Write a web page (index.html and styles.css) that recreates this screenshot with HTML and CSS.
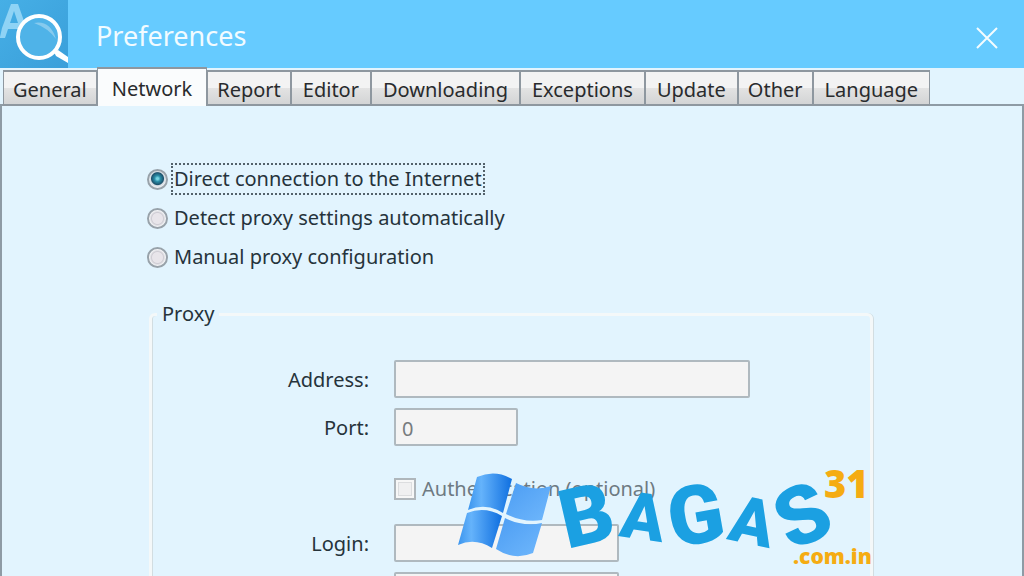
FILE: index.html
```html
<!DOCTYPE html>
<html lang="en">
<head>
<meta charset="utf-8">
<meta name="viewport" content="width=device-width, initial-scale=1">
<title>Preferences</title>
<link rel="stylesheet" href="styles.css">
</head>
<body>
<div class="window">
  <header class="titlebar">
    <svg class="app-icon" viewBox="0 0 68 68" aria-hidden="true">
      <defs>
        <linearGradient id="tile" x1="0" y1="0" x2="1" y2="1"><stop offset="0" stop-color="#46afe6"/><stop offset="1" stop-color="#3a9fda"/></linearGradient>
      </defs>
      <rect width="68" height="68" fill="url(#tile)"/>
      <path d="M0 37L2 28L11 4H18L30 38H23L20 29H8L5 38H0ZM10 23H18L14 11Z" fill="#8fd3f5" fill-rule="evenodd"/>
      <circle cx="39" cy="38" r="21" fill="#4fb3e8"/>
      <path d="M34 23Q50 20 56 39Q48 28 34 23Z" fill="#86caee"/>
      <circle cx="39" cy="37" r="21" fill="none" stroke="#fff" stroke-width="4"/>
      <path d="M54 52L58 50L68 57V63L56 56Z" fill="#fff"/>
    </svg>
    <h1 class="title">Preferences</h1>
    <button class="close" type="button" aria-label="Close">
      <svg class="close-icon" viewBox="0 0 24 24" aria-hidden="true"><path d="M2 2L22 22M22 2L2 22"/></svg>
    </button>
  </header>
  <nav class="tabs" role="tablist">
    <button class="tab tab-tight" type="button" role="tab">General</button>
    <button class="tab tab-active" type="button" role="tab" aria-selected="true">Network</button>
    <button class="tab tab-tight" type="button" role="tab">Report</button>
    <button class="tab" type="button" role="tab">Editor</button>
    <button class="tab" type="button" role="tab">Downloading</button>
    <button class="tab" type="button" role="tab">Exceptions</button>
    <button class="tab" type="button" role="tab">Update</button>
    <button class="tab tab-tight" type="button" role="tab">Other</button>
    <button class="tab" type="button" role="tab">Language</button>
  </nav>
  <main class="panel">
    <form class="form">
      <div class="choices">
        <label class="choice"><input class="radio" type="radio" name="mode" checked><span class="choice-text focused">Direct connection to the Internet</span></label>
        <label class="choice"><input class="radio" type="radio" name="mode"><span class="choice-text">Detect proxy settings automatically</span></label>
        <label class="choice"><input class="radio" type="radio" name="mode"><span class="choice-text">Manual proxy configuration</span></label>
      </div>
      <fieldset class="proxy">
        <legend class="legend">Proxy</legend>
        <div class="fields">
          <label class="label" for="address">Address:</label>
          <input class="field field-long" id="address" type="text" disabled>
          <label class="label" for="port">Port:</label>
          <input class="field field-short" id="port" type="text" value="0" disabled>
          <label class="auth"><input class="check" type="checkbox" disabled>Authentication (optional)</label>
          <label class="label" for="login">Login:</label>
          <input class="field" id="login" type="text" disabled>
          <input class="field field-last" type="password" aria-label="Password" disabled>
        </div>
      </fieldset>
    </form>
  </main>
  <svg class="watermark" viewBox="455 436 440 140" role="img" aria-label="BAGAS31.com.in">
    <defs>
      <linearGradient id="paneA" x1="0" y1="0" x2="1" y2="0"><stop offset="0" stop-color="#3b95ee"/><stop offset=".3" stop-color="#65b3fb"/><stop offset="1" stop-color="#0f6fe0"/></linearGradient>
      <linearGradient id="paneB" x1="0" y1="0" x2="1" y2="1"><stop offset="0" stop-color="#4c9df3"/><stop offset="1" stop-color="#6fb7fc"/></linearGradient>
    </defs>
    <path d="M477 477Q495 469 512 479L503 513Q486 502 468 510Z" fill="url(#paneA)"/>
    <path d="M467 513Q485 506 502 516L492 548Q475 537 458 545Z" fill="url(#paneA)"/>
    <path d="M516 483Q534 492 551 486L542 520Q524 523 506 514Z" fill="url(#paneB)"/>
    <path d="M505 518Q523 527 542 523L533 553Q514 561 496 549Z" fill="url(#paneB)"/>
    <g class="brand">
      <text class="brand-b" transform="translate(567 549) rotate(-13)">B</text>
      <text class="brand-a" transform="translate(618 536) rotate(8)">A</text>
      <text class="brand-b" transform="translate(673 548) rotate(-10)">G</text>
      <text class="brand-a" transform="translate(726 539) rotate(12)">A</text>
      <text class="brand-b" transform="translate(791 552) rotate(-25)">S</text>
    </g>
    <text class="brand-num" x="824" y="498">31</text>
    <text class="brand-dom" x="793" y="564">.com.in</text>
  </svg>
</div>
</body>
</html>
```
FILE: styles.css
```css
* { box-sizing: border-box; }
body {
  margin: 0;
  height: 100vh;
  overflow: hidden;
  font-family: "Noto Sans", "Open Sans", sans-serif;
  font-size: 20px;
  line-height: 28px;
  color: #26333b;
  background: #e2f4fe;
}
button, input { font: inherit; color: inherit; margin: 0; }
.window {
  position: relative;
  display: flex;
  flex-direction: column;
  height: 100vh;
  overflow: hidden;
}
.titlebar {
  display: flex;
  align-items: center;
  flex: none;
  height: 68px;
  background: #66cbff;
}
.app-icon { width: 68px; height: 68px; }
.title {
  flex: 1;
  margin: 0 0 0 28px;
  padding-top: 4px;
  font-size: 27px;
  line-height: 36px;
  font-weight: 400;
  color: #f2fbff;
}
.close {
  display: grid;
  place-items: center;
  width: 40px;
  height: 40px;
  margin: 8px 17px 0 0;
  padding: 0;
  border: 0;
  background: none;
}
.close-icon { width: 24px; height: 24px; fill: none; stroke: #f4fcff; stroke-width: 2; }
.tabs {
  position: relative;
  z-index: 1;
  display: flex;
  align-items: flex-end;
  flex: none;
  height: 39px;
  margin-top: -1px;
  padding-left: 3px;
}
.tab {
  height: 36px;
  padding: 4px 11px 0;
  border: 2px solid #8e979f;
  border-left-width: 1px;
  border-right-width: 1px;
  color: #292b2d;
  background: linear-gradient(#f3f3f3 0 50%, #e3e3e3 50%, #d3d4d5);
  white-space: nowrap;
}
.tab-tight { padding: 4px 9px 0; }
.tab-active {
  height: 39px;
  padding: 2px 14px 0;
  border-bottom: 0;
  background: #fafcfd;
}
.panel {
  flex: 1;
  min-height: 0;
  margin-top: -2px;
  border: 2px solid #8e9ba5;
  border-bottom: 0;
  background: #e2f4fe;
}
.form { padding: 58px 149px 0 145px; }
.choices { display: flex; flex-direction: column; gap: 9px; }
.choice { display: flex; align-items: center; gap: 3px; height: 30px; }
.choice-text { padding: 0 2px; border: 1px solid transparent; }
.focused { border: 2px dotted #53616a; padding: 0 1px; }
.radio {
  appearance: none;
  flex: none;
  width: 21px;
  height: 21px;
  border: 2px solid #98a2aa;
  border-radius: 50%;
  background: radial-gradient(circle, #e8e5ea 0 5px, #cfcdd4 6px, #f4f5f7 8px);
}
.radio:checked { background: radial-gradient(circle at 50% 45%, #77d4e2 0 1px, #2b8da7 3px, #1d526d 6px, #d6dde3 7px, #eef1f5 9px); }
.proxy {
  min-width: 0;
  margin: 28px 0 0 2px;
  padding: 32px 0 0;
  border: 3px solid #f4f8f9;
  border-radius: 6px;
  box-shadow: inset 1px 0 #d2dde1, 1px 0 #d2dde1;
}
.legend { margin-left: 5px; padding: 0 5px; line-height: 28px; }
.fields {
  display: grid;
  grid-template-columns: 217px minmax(0, 356px);
  column-gap: 25px;
  row-gap: 10px;
  align-items: center;
}
.label { text-align: right; padding-top: 2px; }
.field {
  width: 225px;
  max-width: 100%;
  height: 38px;
  padding: 2px 6px 0;
  border: 2px solid #afb9bf;
  border-radius: 2px;
  background: #f4f4f4;
  color: #777b7e;
}
.field-long { width: 100%; }
.field-short { width: 124px; }
.field-last { grid-column: 2; }
.auth {
  grid-column: 2;
  display: flex;
  align-items: center;
  gap: 6px;
  height: 28px;
  margin: 19px 0 11px;
  color: #6e7a82;
}
.check {
  appearance: none;
  flex: none;
  width: 22px;
  height: 22px;
  border: 2px solid #afb6bb;
  background: #f0f0f1;
  box-shadow: inset 0 0 0 2px #f7f7f7, inset 0 0 0 3px #dcdddf;
}
.watermark {
  position: absolute;
  left: 455px;
  bottom: 0;
  width: 440px;
  height: 140px;
  overflow: visible;
  pointer-events: none;
}
.brand { fill: #1ba0e2; font-family: Roboto, sans-serif; font-weight: 900; }
.brand-b { font-size: 82px; }
.brand-a { font-size: 65px; }
.brand-num, .brand-dom { fill: #f5ac12; font-family: "Open Sans", sans-serif; font-weight: 800; }
.brand-num { font-size: 38px; }
.brand-dom { font-size: 21px; }
```
